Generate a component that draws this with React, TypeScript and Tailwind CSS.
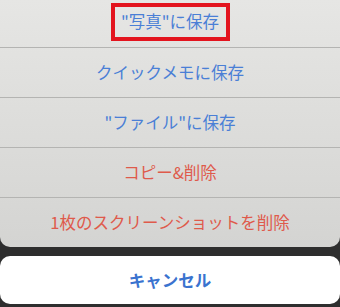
import React from 'react';

const rows = [
  { label: '"写真"に保存', tone: 'blue', highlight: true },
  { label: 'クイックメモに保存', tone: 'blue' },
  { label: '"ファイル"に保存', tone: 'blue' },
  { label: 'コピー&削除', tone: 'red' },
  { label: '1枚のスクリーンショットを削除', tone: 'red' },
];

const App: React.FC = () => {
  return (
    <div
      className="w-[340px] h-[307px] bg-[#2e2e2e] overflow-hidden"
      style={{ fontFamily: '"Noto Sans CJK JP", "Noto Sans", sans-serif' }}
    >
      <div className="rounded-b-[10px] overflow-hidden bg-gradient-to-b from-[#e6e6e4] to-[#d4d4d2]">
        {rows.map((row, i) => (
          <div
            key={row.label}
            className={`flex items-center justify-center ${
              i === 0 ? 'h-[47px]' : 'h-[50px] border-t border-[#b4b4b2]'
            }`}
          >
            {row.highlight ? (
              <span className="flex items-center justify-center w-[119px] h-[38px] mb-[4px] border-[4px] border-[#e3141e] text-[16.5px] text-[#4a7fd6]">
                {row.label}
              </span>
            ) : (
              <span
                className={`text-[16.5px] ${
                  row.tone === 'red' ? 'text-[#df5a4b]' : 'text-[#4a7fd6]'
                }`}
              >
                {row.label}
              </span>
            )}
          </div>
        ))}
      </div>
      <div className="mt-[9px] h-[48px] rounded-[10px] bg-white flex items-center justify-center">
        <span className="text-[16.5px] font-bold text-[#3a73cf]">キャンセル</span>
      </div>
    </div>
  );
};

export default App;
